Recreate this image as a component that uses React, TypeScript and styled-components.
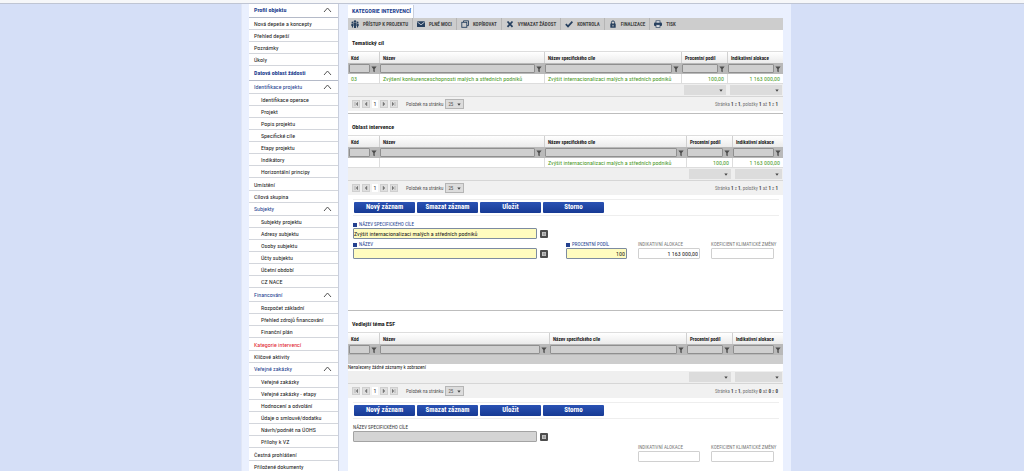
import React, { useId } from 'react';
import styled, { createGlobalStyle, css } from 'styled-components';

const navy = '#24418f';
const line = '#d3d6dc';
const green = '#4c9a2a';

const GlobalStyle = createGlobalStyle`
  * { box-sizing: border-box; }
  body {
    margin: 0;
    background: #d5dff7;
    color: #222;
    font: 6px/8px "Roboto Condensed", "Liberation Sans Narrow", Roboto, sans-serif;
  }
  button, input, select { font: inherit; color: inherit; margin: 0; padding: 0; border-radius: 0; }
  a { color: inherit; text-decoration: none; }
  ul { list-style: none; margin: 0; padding: 0; }
`;

const Page = styled.div`
  height: 100vh;
  overflow: hidden;
  display: flex;
  flex-direction: column;
`;
const TopStrip = styled.header`
  flex: none;
  height: 4px;
  background: #f6f7f9;
  border-bottom: 1px solid #bfc5d3;
`;
const Columns = styled.div`
  flex: 1;
  display: grid;
  grid-template-columns: 241fr 550fr 233fr;
`;
const Shell = styled.div`
  grid-column: 2;
  display: flex;
  align-items: stretch;
  gap: 9px;
  padding: 0 8px 0 7px;
  background: #eaf0fe;
  border-left: 1px solid #e0e6f5;
`;

const Sidebar = styled.nav`
  flex: none;
  width: 90px;
  background: #fff;
  border-right: 1px solid #c9cfdd;
`;
const Section = styled.section`
  padding-bottom: 1px;
`;
const headBase = css`
  width: 100%;
  display: flex;
  align-items: center;
  justify-content: space-between;
  padding: 0 6px 0 5px;
  border: 0;
  background: #fff;
  color: ${navy};
  text-align: left;
`;
const SectionHead = styled.button`
  ${headBase}
  height: 14px;
  padding-bottom: 2px;
  font-weight: 700;
  border-bottom: 1px solid #b4bac8;
`;
const GroupHead = styled.button`
  ${headBase}
  height: 13px;
  border-bottom: 1px solid ${line};
`;
const Group = styled.ul`
  padding-bottom: 1px;
`;
const NavLink = styled.a<{ $level?: number; $active?: boolean }>`
  display: flex;
  align-items: center;
  height: 12px;
  padding-left: ${p => (p.$level ? 12 : 5)}px;
  border-bottom: 1px solid ${line};
  white-space: nowrap;
  color: ${p => (p.$active ? '#e0202c' : '#222')};
`;

const Main = styled.main`
  flex: 1;
  min-width: 0;
  display: flex;
  flex-direction: column;
  padding-top: 1px;
`;
const Tab = styled.h1`
  align-self: flex-start;
  margin: 0;
  height: 13px;
  padding: 2px 2px 0 4px;
  background: #fff;
  border-right: 1px solid #c9cfdd;
  color: ${navy};
  font-size: 6px;
  line-height: 8px;
  font-weight: 700;
`;
const Toolbar = styled.div`
  flex: none;
  display: flex;
  height: 12px;
  background: #cdcdcd;
`;
const ToolButton = styled.button`
  display: flex;
  align-items: center;
  gap: 4px;
  padding: 0 4px;
  border: 0;
  border-right: 1px solid #b5b5b5;
  background: none;
  font-size: 5px;
  font-weight: 700;
  color: #444;
  white-space: nowrap;
  &:first-child { padding-left: 3px; }
  &:last-child { border-right: 0; }
  svg { display: block; }
`;

const Panel = styled.section<{ $grow?: boolean; $height?: number }>`
  background: #fff;
  flex: ${p => (p.$grow ? '1 0 auto' : 'none')};
  min-height: ${p => p.$height ?? 0}px;
  border-bottom: ${p => (p.$grow ? 0 : 1)}px solid #bdbdbd;
`;
const PanelTitle = styled.h2`
  margin: 0;
  height: 21px;
  padding: 9px 4px 0;
  font-size: 6px;
  line-height: 8px;
  font-weight: 700;
`;
const Grid = styled.table`
  width: 100%;
  table-layout: fixed;
  border-collapse: separate;
  border-spacing: 0;
  border-top: 1px solid #ddd;
`;
const HeadCell = styled.th`
  height: 11px;
  padding: 0 3px;
  background: linear-gradient(#fff, #ebebeb);
  font-size: 5px;
  line-height: 8px;
  text-align: left;
  white-space: nowrap;
  & + & { border-left: 1px solid #d0d0d0; }
`;
const FilterCell = styled.td`
  height: 11px;
  padding: 0 1px;
  background: #b9b9b9;
`;
const FilterBox = styled.div`
  display: flex;
  align-items: center;
  gap: 1px;
  padding-right: 1px;
`;
const FilterInput = styled.input`
  flex: 1;
  min-width: 0;
  height: 9px;
  border: 1px solid #8f8f8f;
  border-radius: 1px;
  background: #cfcfcf;
`;
const FilterButton = styled.button`
  flex: none;
  width: 6px;
  height: 8px;
  border: 0;
  background: none;
  svg { display: block; }
`;
const DataCell = styled.td<{ $end?: boolean }>`
  height: 10px;
  padding: 0 3px;
  color: ${green};
  text-align: ${p => (p.$end ? 'right' : 'left')};
  white-space: nowrap;
  line-height: 8px;
  border-bottom: 1px solid #ddd;
  & + & { border-left: 1px solid #ddd; }
`;
const BlankCell = styled.td`
  height: 9px;
  padding: 0;
  background: #cdcdcd;
`;
const NoteCell = styled.td`
  height: 7px;
  padding: 0;
  font-size: 5px;
  line-height: 7px;
`;
const SumCell = styled.td`
  height: 13px;
  padding: 0 1px 0 3px;
  background: #efefef;
  border-bottom: 1px solid #d6d6d6;
`;
const SelectWrap = styled.span<{ $wide?: boolean }>`
  display: grid;
  align-items: center;
  width: ${p => (p.$wide ? 'auto' : '19px')};
  & > * { grid-area: 1 / 1; }
  svg { justify-self: end; margin-right: 3px; pointer-events: none; }
`;
const Select = styled.select<{ $plain?: boolean }>`
  appearance: none;
  width: 100%;
  height: 10px;
  padding-left: 2px;
  border: ${p => (p.$plain ? 0 : 1)}px solid #b5b5b5;
  background: #dcdcdc;
  font-size: 5px;
`;
const Pager = styled.div`
  display: flex;
  align-items: center;
  height: 14px;
  padding: 0 5px 0 4px;
  background: #f1f1f1;
  color: #555;
  font-size: 5px;
`;
const PageButtons = styled.div`
  display: flex;
  gap: 2px;
  margin-right: 8px;
`;
const PageButton = styled.button<{ $current?: boolean }>`
  display: grid;
  place-items: center;
  width: ${p => (p.$current ? 6 : 8)}px;
  height: 8px;
  border: ${p => (p.$current ? 0 : 1)}px solid #cfcfcf;
  background: ${p => (p.$current ? '#fff' : '#dedede')};
  color: #333;
  font-size: 6px;
`;
const PerPage = styled.label`
  display: flex;
  align-items: center;
  gap: 2px;
`;
const PageInfo = styled.span`
  margin-left: auto;
  color: #777;
  b { color: #444; }
`;

const Actions = styled.div`
  display: flex;
  gap: 2px;
  margin: 4px 4px 0 5px;
  padding: 2px 1px;
  border-top: 1px solid #eee;
  border-bottom: 1px solid #eee;
`;
const ActionButton = styled.button`
  width: 61px;
  height: 11px;
  border: 0;
  border-radius: 1px;
  background: linear-gradient(#2a52b4, #173a94);
  color: #fff;
  font-size: 7px;
  line-height: 11px;
  font-weight: 700;
`;
const Form = styled.div`
  display: grid;
  grid-template-columns: 1fr 61px 62px 63px;
  column-gap: 11px;
  row-gap: 2px;
  padding: 5px 9px 0 5px;
`;
const Field = styled.div<{ $column?: number; $row?: number }>`
  min-width: 0;
  ${p => p.$column && `grid-column: ${p.$column};`}
  ${p => p.$row && `grid-row: ${p.$row};`}
`;
const FieldLabel = styled.label<{ $tone: 'navy' | 'dark' | 'gray' }>`
  display: flex;
  align-items: center;
  gap: 2px;
  height: 7px;
  font-size: 5px;
  line-height: 7px;
  white-space: nowrap;
  color: ${p => ({ navy, dark: '#333', gray: '#777' })[p.$tone]};
`;
const InfoMark = styled.span`
  width: 4px;
  height: 4px;
  background: ${navy};
`;
const FieldRow = styled.div<{ $lookup?: boolean }>`
  display: flex;
  align-items: center;
  gap: 3px;
  padding-right: ${p => (p.$lookup ? 7 : 0)}px;
`;
const fills = { yellow: '#fffcbf', gray: '#d4d4d4', white: '#fff' };
const TextInput = styled.input<{ $fill: keyof typeof fills; $end?: boolean }>`
  flex: 1;
  min-width: 0;
  height: 11px;
  padding: 0 ${p => (p.$end ? 1 : 0)}px;
  border: 1px solid ${p => ({ yellow: '#7d8ca0', gray: '#a3a3a3', white: '#d0d0d0' })[p.$fill]};
  border-radius: 1px;
  background: ${p => fills[p.$fill]};
  text-align: ${p => (p.$end ? 'right' : 'left')};
`;
const LookupButton = styled.button`
  flex: none;
  width: 8px;
  height: 8px;
  border: 0;
  background: none;
  svg { display: block; }
`;

const Chevron = () => (
  <svg width="9" height="6" viewBox="0 0 9 6" fill="none" stroke="#555" strokeWidth="1">
    <path d="M1 5 4.500 1 8 5" />
  </svg>
);
const Funnel = () => (
  <svg width="6" height="8" viewBox="0 0 6 8" fill="#4d4d4d"><path d="M.4 1.500h5.200L3.700 4v3.200l-1.400-.8V4z" /></svg>
);
const Caret = () => (
  <svg width="4" height="3" viewBox="0 0 4 3" fill="#444"><path d="M.3.5h3.400L2 2.700z" /></svg>
);
const Lookup = () => (
  <svg width="8" height="8" viewBox="0 0 8 8">
    <rect width="8" height="8" rx="1" fill="#4d4d4d" />
    <rect x="2" y="2" width="4" height="4" fill="#c4c4c4" />
    <path d="M3 3.300h2.400M3 4.700h2.400" stroke="#777" strokeWidth=".6" />
  </svg>
);

const ink = '#27405f';
const toolIcons: Record<string, React.ReactNode> = {
  access: (
    <g fill={ink}>
      <circle cx="4" cy="1.500" r="1.300" />
      <circle cx="1.500" cy="2.500" r="1" /><circle cx="6.500" cy="2.500" r="1" />
      <path d="M2.500 3h3v3H5v2H3V6h-.5zM.3 3.800h1.800v3.600H.9V6H.3zM5.900 3.800h1.800V6h-.6v1.400H5.900z" />
    </g>
  ),
  mail: (
    <g>
      <rect y="1.200" width="8" height="5.800" rx=".6" fill={ink} />
      <path d="M.4 2 4 4.800 7.600 2" fill="none" stroke="#dfe3e8" strokeWidth=".8" />
    </g>
  ),
  copy: (
    <g fill="none" stroke={ink} strokeWidth=".9">
      <path d="M2.500 2V.8h5v4.800H6" /><rect x=".8" y="2.300" width="5" height="5" />
    </g>
  ),
  remove: <path d="M1.500 1.500 6.500 6.800M6.500 1.500 1.500 6.800" stroke={ink} strokeWidth="1.800" />,
  check: <path d="M.8 4.200 3 6.400 7.400 1.600" fill="none" stroke={ink} strokeWidth="1.700" />,
  lock: (
    <g>
      <path d="M2.400 4V2.500a1.600 1.600 0 0 1 3.200 0V4" fill="none" stroke={ink} strokeWidth="1" />
      <rect x="1.300" y="3.600" width="5.400" height="4.200" rx=".5" fill={ink} />
      <rect x="3.500" y="4.900" width="1" height="1.600" fill="#cdcdcd" />
    </g>
  ),
  print: (
    <g>
      <rect y="2.500" width="8" height="3.500" rx="1" fill={ink} />
      <rect x="2" y=".8" width="4" height="2.200" fill="#e4e6ea" stroke={ink} strokeWidth=".7" />
      <rect x="2" y="4.800" width="4" height="2.500" fill="#e4e6ea" stroke={ink} strokeWidth=".7" />
    </g>
  ),
};
const tools = [
  ['access', 'PŘÍSTUP K PROJEKTU'], ['mail', 'PLNÉ MOCI'], ['copy', 'KOPÍROVAT'],
  ['remove', 'VYMAZAT ŽÁDOST'], ['check', 'KONTROLA'], ['lock', 'FINALIZACE'], ['print', 'TISK'],
];

type Entry = string | { title: string; items: string[] };
const menu: { title: string; entries: Entry[] }[] = [
  { title: 'Profil objektu', entries: ['Nová depeše a koncepty', 'Přehled depeší', 'Poznámky', 'Úkoly'] },
  {
    title: 'Datová oblast žádosti',
    entries: [
      { title: 'Identifikace projektu', items: ['Identifikace operace', 'Projekt', 'Popis projektu', 'Specifické cíle', 'Etapy projektu', 'Indikátory', 'Horizontální principy'] },
      'Umístění', 'Cílová skupina',
      { title: 'Subjekty', items: ['Subjekty projektu', 'Adresy subjektu', 'Osoby subjektu', 'Účty subjektu', 'Účetní období', 'CZ NACE'] },
      { title: 'Financování', items: ['Rozpočet základní', 'Přehled zdrojů financování', 'Finanční plán'] },
      'Kategorie intervencí', 'Klíčové aktivity',
      { title: 'Veřejné zakázky', items: ['Veřejné zakázky', 'Veřejné zakázky - etapy', 'Hodnocení a odvolání', 'Údaje o smlouvě/dodatku', 'Návrh/podnět na ÚOHS', 'Přílohy k VZ'] },
      'Čestná prohlášení', 'Přiložené dokumenty',
    ],
  },
];

const heads = ['Kód', 'Název', 'Název specifického cíle', 'Procentní podíl', 'Indikativní alokace'];

function PickList({ label, value, plain }: { label: string; value?: string; plain?: boolean }) {
  return (
    <SelectWrap $wide={plain}>
      <Select $plain={plain} aria-label={label}><option>{value ?? ''}</option></Select>
      <Caret />
    </SelectWrap>
  );
}

function DataGrid({ widths, row, range }: { widths: (number | undefined)[]; row?: string[]; range: string[] }) {
  return (
    <>
      <Grid>
        <colgroup>{widths.map((w, i) => <col key={i} width={w} />)}</colgroup>
        <thead>
          <tr>{heads.map(h => <HeadCell key={h}>{h}</HeadCell>)}</tr>
        </thead>
        <tbody>
          <tr>
            {heads.map(h => (
              <FilterCell key={h}>
                <FilterBox>
                  <FilterInput aria-label={`Filtr: ${h}`} />
                  <FilterButton aria-label={`Filtrovat ${h}`}><Funnel /></FilterButton>
                </FilterBox>
              </FilterCell>
            ))}
          </tr>
          {row ? (
            <tr>{row.map((c, i) => <DataCell key={i} $end={i > 2}>{c}</DataCell>)}</tr>
          ) : (
            <>
              <tr><BlankCell colSpan={5} /></tr>
              <tr><NoteCell colSpan={5}>Nenalezeny žádné záznamy k zobrazení</NoteCell></tr>
            </>
          )}
          <tr>
            <SumCell colSpan={3} />
            <SumCell><PickList plain label="Souhrn podílu" /></SumCell>
            <SumCell><PickList plain label="Souhrn alokace" /></SumCell>
          </tr>
        </tbody>
      </Grid>
      <Pager>
        <PageButtons>
          <PageButton aria-label="První"><Arrow d="M1 0v4M4 0 2 2l2 2z" /></PageButton>
          <PageButton aria-label="Předchozí"><Arrow d="M3 0 1 2l2 2z" /></PageButton>
          <PageButton $current>1</PageButton>
          <PageButton aria-label="Další"><Arrow d="M1 0l2 2-2 2z" /></PageButton>
          <PageButton aria-label="Poslední"><Arrow d="M0 0l2 2-2 2zM3 0v4" /></PageButton>
        </PageButtons>
        <PerPage>Položek na stránku <PickList label="Položek na stránku" value="25" /></PerPage>
        <PageInfo>
          Stránka <b>1</b> z <b>1</b>, položky <b>{range[0]}</b> až <b>{range[1]}</b> z <b>{range[2]}</b>
        </PageInfo>
      </Pager>
    </>
  );
}

const Arrow = ({ d }: { d: string }) => (
  <svg width="4" height="4" viewBox="0 0 4 4" fill="#777" stroke="#777" strokeWidth=".4"><path d={d} /></svg>
);

function ActionBar() {
  return (
    <Actions>
      {['Nový záznam', 'Smazat záznam', 'Uložit', 'Storno'].map(t => <ActionButton key={t}>{t}</ActionButton>)}
    </Actions>
  );
}

interface FormFieldProps {
  label: string;
  tone: 'navy' | 'dark' | 'gray';
  fill: keyof typeof fills;
  value?: string;
  end?: boolean;
  lookup?: boolean;
  column?: number;
  row?: number;
}
function FormField({ label, tone, fill, value = '', end, lookup, column, row }: FormFieldProps) {
  const id = useId();
  return (
    <Field $column={column} $row={row}>
      <FieldLabel htmlFor={id} $tone={tone}>{tone === 'navy' && <InfoMark />}{label}</FieldLabel>
      <FieldRow $lookup={lookup}>
        <TextInput id={id} $fill={fill} $end={end} defaultValue={value} />
        {lookup && <LookupButton aria-label={`Vybrat: ${label}`}><Lookup /></LookupButton>}
      </FieldRow>
    </Field>
  );
}

const SPECIFIC = 'Zvýšit internacionalizaci malých a středních podniků';

export default function App() {
  return (
    <Page>
      <GlobalStyle />
      <TopStrip />
      <Columns>
        <Shell>
          <Sidebar>
            {menu.map(s => (
              <Section key={s.title}>
                <SectionHead>{s.title}<Chevron /></SectionHead>
                {s.entries.map((e, i) =>
                  typeof e === 'string' ? (
                    <NavLink key={i} href="#" $active={e === 'Kategorie intervencí'}>{e}</NavLink>
                  ) : (
                    <React.Fragment key={i}>
                      <GroupHead>{e.title}<Chevron /></GroupHead>
                      <Group>
                        {e.items.map(t => <li key={t}><NavLink href="#" $level={1}>{t}</NavLink></li>)}
                      </Group>
                    </React.Fragment>
                  ),
                )}
              </Section>
            ))}
          </Sidebar>
          <Main>
            <Tab>KATEGORIE INTERVENCÍ</Tab>
            <Toolbar>
              {tools.map(([icon, text]) => (
                <ToolButton key={icon}>
                  <svg width="8" height="8" viewBox="0 0 8 8">{toolIcons[icon]}</svg>
                  {text}
                </ToolButton>
              ))}
            </Toolbar>
            <Panel $height={84}>
              <PanelTitle>Tematický cíl</PanelTitle>
              <DataGrid
                widths={[31, undefined, 137, 46, 56]}
                row={['03', 'Zvýšení konkurenceschopnosti malých a středních podniků', SPECIFIC, '100,00', '1 163 000,00']}
                range={['1', '1', '1']}
              />
            </Panel>
            <Panel $height={197}>
              <PanelTitle>Oblast intervence</PanelTitle>
              <DataGrid
                widths={[31, undefined, 142, 46, 51]}
                row={['', '', SPECIFIC, '100,00', '1 163 000,00']}
                range={['1', '1', '1']}
              />
              <ActionBar />
              <Form>
                <FormField label="NÁZEV SPECIFICKÉHO CÍLE" tone="navy" fill="yellow" value={SPECIFIC} lookup />
                <FormField column={1} label="NÁZEV" tone="navy" fill="yellow" lookup />
                <FormField label="PROCENTNÍ PODÍL" tone="navy" fill="yellow" value="100" end />
                <FormField label="INDIKATIVNÍ ALOKACE" tone="gray" fill="white" value="1 163 000,00" end />
                <FormField label="KOEFICIENT KLIMATICKÉ ZMĚNY" tone="gray" fill="white" />
              </Form>
            </Panel>
            <Panel $grow>
              <PanelTitle>Vedlejší téma ESF</PanelTitle>
              <DataGrid widths={[31, undefined, 137, 46, 51]} range={['0', '0', '0']} />
              <ActionBar />
              <Form>
                <FormField label="NÁZEV SPECIFICKÉHO CÍLE" tone="dark" fill="gray" lookup />
                <FormField column={3} row={2} label="INDIKATIVNÍ ALOKACE" tone="gray" fill="white" />
                <FormField column={4} row={2} label="KOEFICIENT KLIMATICKÉ ZMĚNY" tone="gray" fill="white" />
              </Form>
            </Panel>
          </Main>
        </Shell>
      </Columns>
    </Page>
  );
}
